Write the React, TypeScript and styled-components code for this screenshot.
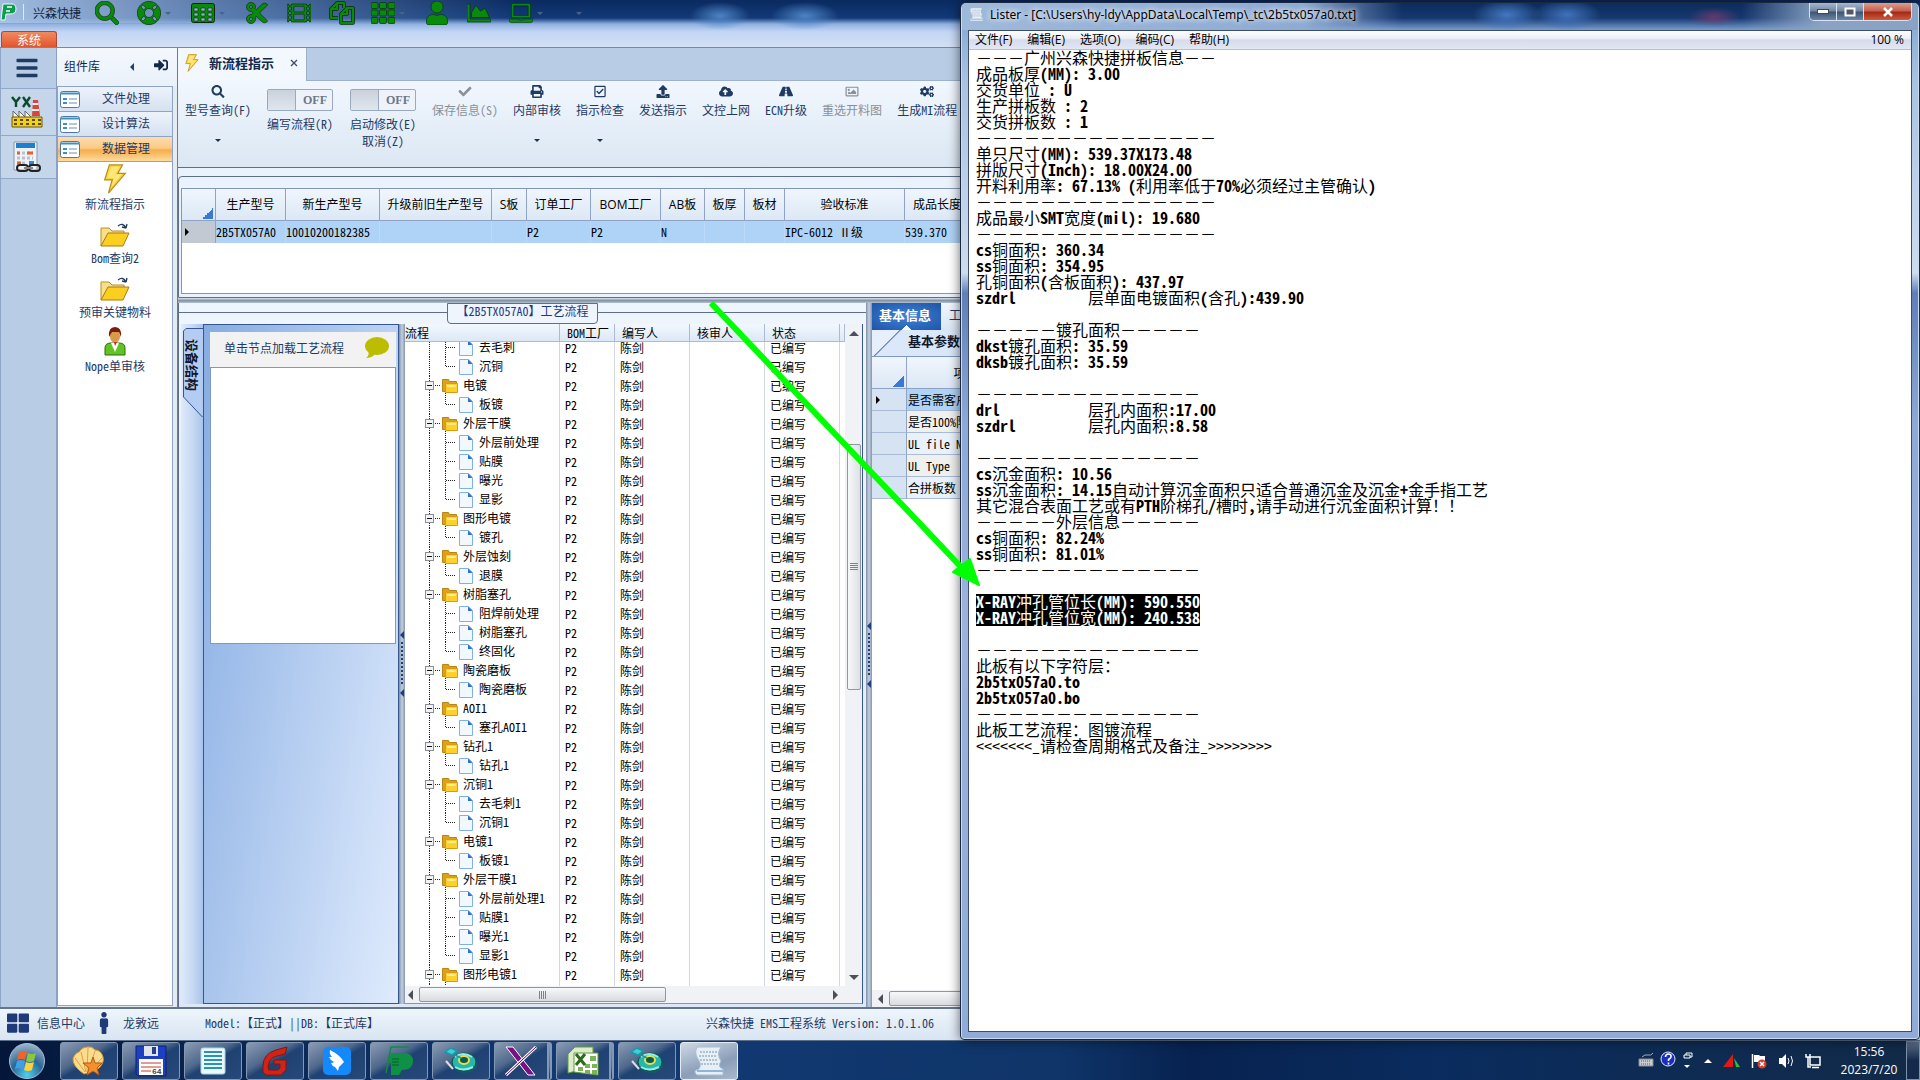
import React from "react";
import styled, { createGlobalStyle, css } from "styled-components";
import {
  FaBars, FaChartArea, FaCheck, FaCloudUploadAlt, FaCogs, FaCut, FaFilm, FaLaptop, FaLifeRing,
  FaMale, FaPrint, FaRegCheckSquare, FaRegImage, FaRoad, FaSearch, FaSignInAlt, FaTh, FaThLarge,
  FaUpload, FaUser,
} from "react-icons/fa";

const SONG = '"Noto Sans Mono CJK SC", "Liberation Mono", "Noto Sans CJK SC", monospace';
const YAHEI = '"Open Sans", "Noto Sans CJK SC", sans-serif';
const NAVY = "#1f3a63";

const Global = createGlobalStyle`
  *, *::before, *::after { box-sizing: border-box; }
  body { margin: 0; overflow: hidden; background: #0b2147; font: 12px/16px ${SONG}; color: ${NAVY}; }
  button { font: inherit; color: inherit; background: none; border: 0; padding: 0; margin: 0; white-space: nowrap; }
  table { border-collapse: separate; border-spacing: 0; table-layout: fixed; }
  th, td { padding: 0; font-weight: normal; text-align: left; overflow: hidden; white-space: nowrap; }
  svg { display: block; flex: none; }
`;

const Desktop = styled.div`
  position: relative;
  display: flex;
  flex-direction: column;
  height: 100vh;
  overflow: hidden;
`;

/* ---------- main window ---------- */

const TitleArea = styled.header`
  display: flex;
  flex-direction: column;
  justify-content: space-between;
  height: 48px;
  border-bottom: 1px solid #7388ab;
  background:
    radial-gradient(ellipse 30px 14px at 720px 16px, #4d83c4, transparent),
    radial-gradient(ellipse 34px 14px at 805px 16px, #4d83c4, transparent),
    linear-gradient(90deg, rgba(170, 196, 230, 0.95) 0, rgba(140, 172, 216, 0.6) 220px, transparent 520px) 0 0 / 100% 23px no-repeat,
    linear-gradient(#0a2a60 0, #123a78 18px, #8fb0e0 24px, #c3d6f6 32px, #d4e0f4 48px);
`;
const QuickBar = styled.div`
  display: flex;
  align-items: center;
  height: 26px;
`;
const AppTitle = styled.span`
  width: 86px;
  display: flex;
  align-items: center;
  gap: 9px;
  color: #10243f;
`;
const QuickButton = styled.button<{ $menu?: boolean }>`
  width: ${(p) => (p.$menu ? 54 : 42)}px;
  padding-left: 9px;
  display: flex;
  align-items: center;
  gap: 4px;
  height: 24px;
  font-size: 24px;
  color: #0a8a0a;
  svg.glyph { stroke: #052c05; stroke-width: 14px; }
`;
const SystemTab = styled.button`
  align-self: flex-start;
  margin-left: 1px;
  width: 56px;
  height: 16px;
  line-height: 16px;
  overflow: hidden;
  color: #fff;
  border: 1px solid #b4462c;
  border-bottom: 0;
  border-radius: 3px 3px 0 0;
  background: linear-gradient(#f08a5e, #e2552f);
`;

const Caret = styled.span<{ $dim?: boolean }>`
  border: 3px solid transparent;
  border-top-color: ${(p) => (p.$dim ? "#46638c" : "#1f3050")};
  border-bottom: 0;
`;

const Body = styled.div`
  flex: 1;
  min-height: 0;
  display: flex;
  background: #b9cce5;
`;
const Rail = styled.nav`
  width: 56px;
  display: flex;
  flex-direction: column;
  align-items: center;
  border-left: 1px solid #8fa6c8;
`;
const RailButton = styled.button<{ $h: number; $lit?: boolean }>`
  width: 100%;
  height: ${(p) => p.$h}px;
  padding-right: 4px;
  display: grid;
  place-items: center;
  font-size: 24px;
  border-bottom: 1px solid #92a8ca;
  background: ${(p) => (p.$lit ? "#c6d6ea" : "none")};
`;

const Library = styled.aside`
  width: 122px;
  padding: 0 4px 1px 0;
  display: flex;
  flex-direction: column;
  background: #e6ebf2;
  border-left: 1px solid #8aa0c4;
  border-right: 1px solid #6c7a92;
`;
const LibraryHead = styled.div`
  height: 38px;
  margin-right: -4px;
  padding: 0 9px 0 7px;
  display: flex;
  align-items: center;
  background: linear-gradient(#f4f8fd, #e9f1fa);
  font-family: ${YAHEI};
  color: #14284a;
  b { font-weight: normal; flex: 1; }
  svg { margin: 0 0 4px 20px; }
`;
const LibraryGroup = styled.button<{ $on?: boolean }>`
  display: flex;
  align-items: center;
  width: 100%;
  height: 25px;
  padding-left: 2px;
  gap: 22px;
  border: 1px solid #8ea3c6;
  border-bottom: 0;
  span { line-height: 20px; padding-bottom: 2px; }
  background: ${(p) =>
    p.$on ? "linear-gradient(#fddcae 0, #fbcb86 45%, #f6ad4c 55%, #fddc9f 100%)" : "linear-gradient(#edf3fb, #d5e1f1)"};
`;
const LibraryList = styled.div`
  flex: 1;
  display: flex;
  flex-direction: column;
  border: 1px solid #8ea3c6;
  background: #fff;
`;
const LibraryItem = styled.button`
  height: 54px;
  padding-bottom: 3px;
  display: flex;
  flex-direction: column;
  align-items: center;
  justify-content: flex-end;
  gap: 1px;
  line-height: 18px;
`;

const Workspace = styled.main`
  flex: 1;
  min-width: 0;
  display: flex;
  flex-direction: column;
  background: #eaf2fb;
`;
const DocTabs = styled.div`
  height: 33px;
  display: flex;
  background: #b9cce5;
  border-bottom: 1px solid #9db1cf;
`;
const DocTab = styled.div`
  height: 33px;
  width: 129px;
  padding: 0 8px 4px 5px;
  display: flex;
  align-items: center;
  gap: 8px;
  font-size: 13px;
  font-weight: bold;
  color: #14284a;
  background: #f3f8fe;
  border-right: 1px solid #9db1cf;
  white-space: nowrap;
  button { margin-left: auto; }
`;
const Toolbar = styled.div`
  height: 87px;
  padding: 4px 8px 0 7px;
  display: flex;
  align-items: flex-start;
  gap: 15px;
  overflow: hidden;
  background: linear-gradient(#f1f7fe, #dbe7f3);
  border-bottom: 1px solid #5e6f8d;
`;
const Tool = styled.button<{ $off?: boolean }>`
  display: flex;
  flex-direction: column;
  align-items: center;
  font-size: 12px;
  line-height: 18px;
  color: ${(p) => (p.$off ? "#8b9097" : NAVY)};
  svg { height: 13px; width: 14px; margin-bottom: 3px; }
  ${Caret} { margin-top: 20px; }
`;
const ToggleTool = styled.label`
  width: 68px;
  padding-top: 4px;
  display: flex;
  flex-direction: column;
  align-items: center;
  line-height: 17px;
  white-space: nowrap;
  position: relative;
  input { position: absolute; opacity: 0; margin: 0; }
`;
const Switch = styled.span`
  width: 66px;
  height: 22px;
  margin-bottom: 4px;
  display: flex;
  border: 1px solid #9aa9bf;
  border-radius: 2px;
  font: bold 12px/20px "Liberation Serif", serif;
  letter-spacing: 0;
  color: #6a7787;
  background: #eef3f9;
  &::before { content: ""; width: 28px; margin-right: 7px; border-right: 1px solid #9aa9bf; background: linear-gradient(#c9d1db, #dfe6ee); }
`;

const GridBox = styled.section`
  margin: 8px 0 0;
  padding: 11px 0 3px 2px;
  height: 122px;
  border: 1px solid #5e6f8d;
  border-radius: 4px 0 0 0;
  display: flex;
`;
const GridPane = styled.div`
  flex: 1;
  min-width: 0;
  overflow: hidden;
  background: #fff;
  border: 1px solid #8097bd;
`;
const DataTable = styled.table`
  width: 1060px;
  font-size: 12px;
  color: #000;
  th { height: 32px; font-family: ${YAHEI}; text-align: center; border-right: 1px solid #8ea3c6; border-bottom: 1px solid #8ea3c6; background: linear-gradient(#f0f6fd, #dce8f5); }
  td { height: 22px; line-height: 20px; padding-left: 0; background: #afd3f6; border-right: 1px solid #bcdaf7; }
  td:first-child { background: #c3c9d2; border-right: 1px solid #8ea3c6; padding-left: 3px; }
`;
const Corner = styled.span`
  display: block;
  margin: 17px 2px 0 auto;
  width: 11px;
  height: 11px;
  background: linear-gradient(135deg, transparent 50%, #3a78d8 50%);
`;
const RowMark = styled.span`
  display: block;
  width: 0;
  border: 4px solid transparent;
  border-left: 4px solid #000;
  border-right: 0;
`;
const HSash = styled.div`
  height: 5px;
  background: linear-gradient(#dbe7f3, #8593a5, #b4c0cf);
`;

const Lower = styled.div`
  flex: 1;
  min-height: 0;
  display: flex;
`;
const FlowGroup = styled.section`
  flex: 0 0 688px;
  min-width: 0;
  display: flex;
  flex-direction: column;
  border-left: 1px solid #5e6f8d;
  background: linear-gradient(#eef5fd, #dce8f5);
`;
const LegendRow = styled.div`
  height: 21px;
  display: flex;
`;
const LegendLine = styled.i`
  flex: 1;
  height: 12px;
  align-self: flex-end;
  border-top: 1px solid #5e6f8d;
`;
const Legend = styled.h2`
  margin: 0;
  width: 151px;
  font-size: 12px;
  font-weight: normal;
  line-height: 13px;
  text-align: center;
  white-space: nowrap;
  border: 1px solid #5e6f8d;
  border-radius: 0 0 4px 4px;
  color: #1f3a83;
`;
const FlowBody = styled.div`
  flex: 1;
  min-height: 0;
  display: flex;
  padding: 0 3px 3px 2px;
`;
const SideStrip = styled.div`
  width: 22px;
  background: linear-gradient(90deg, #dfeafa, #c3d6f2 60%, #a8c3ec);
`;
const SideTab = styled.button`
  position: relative;
  width: 22px;
  height: 94px;
  padding: 0 0 12px;
  writing-mode: vertical-rl;
  text-orientation: sideways;
  font-size: 13px;
  line-height: 22px;
  font-weight: bold;
  color: #10182c;
  svg { position: absolute; left: 0; top: 0; z-index: 0; }
  span { position: relative; }
`;
const StructurePane = styled.div`
  width: 196px;
  padding: 7px 2px 0 6px;
  display: flex;
  flex-direction: column;
  border: 1px solid #35568f;
  background: linear-gradient(100deg, #86ace2, #dfebfd);
`;
const Hint = styled.div`
  height: 35px;
  padding: 0 6px 3px 14px;
  display: flex;
  align-items: center;
  justify-content: space-between;
  background: #f2f2f2;
  white-space: nowrap;
`;
const Blank = styled.div`
  height: 277px;
  background: #fff;
  border: 1px solid #7d98c4;
`;
const VSash = styled.div`
  flex: 0 0 6px;
  display: flex;
  flex-direction: column;
  align-items: center;
  justify-content: center;
  gap: 3px;
  background: linear-gradient(90deg, #7f8fa6, #c4d0e0, #8494ab);
`;
const SashArrow = styled.i`
  border: 4px solid transparent;
  border-right: 4px solid #1e3f7e;
  border-left: 0;
`;
const SashGrip = styled.i`
  width: 2px;
  height: 44px;
  background: repeating-linear-gradient(#1e3f7e 0 2px, transparent 2px 4px);
`;
const TreePane = styled.div`
  flex: 1;
  min-width: 0;
  display: flex;
  flex-direction: column;
  background: #fff;
  border-right: 1px solid #35568f;
  border-bottom: 1px solid #7d98c4;
`;
const TreeTop = styled.div`
  flex: 1;
  min-height: 0;
  display: flex;
`;
const TreeTables = styled.div`
  flex: 1;
  min-width: 0;
  display: flex;
  flex-direction: column;
`;
const TreeHead = styled.table`
  width: 100%;
  color: #000;
  th { height: 18px; line-height: 17px; padding-left: 7px; border-right: 1px solid #a9bbd6; border-bottom: 1px solid #a9bbd6; background: linear-gradient(#f3f8fe, #dce8f5); }
  th:first-child { padding-left: 0; }
`;
const TreeScroll = styled.div`
  flex: 1;
  min-height: 0;
  overflow: hidden;
`;
const TreeTable = styled.table`
  width: 100%;
  margin-top: -4px;
  color: #000;
  td { height: 19px; line-height: 17px; padding-left: 5px; border-right: 1px solid #d3d8df; }
  td:first-child { padding-left: 0; }
  td:last-child { border-right: 0; }
`;
const Node = styled.div`
  display: flex;
  height: 19px;
`;
const VBar = styled.div`
  width: 17px;
  padding: 7px 0 6px;
  display: flex;
  flex-direction: column;
  align-items: center;
  background: #f0f2f5;
`;
const HBar = styled.div`
  height: 17px;
  padding: 0 6px 0 3px;
  display: flex;
  align-items: center;
  background: #f0f2f5;
`;
const Thumb = styled.i<{ $dir: "h" | "v"; $size: number }>`
  display: grid;
  place-items: center;
  border: 1px solid #8f979f;
  border-radius: 2px;
  &::after { content: ""; }
  ${(p) =>
    p.$dir === "h"
      ? css`width: ${p.$size}px; height: 15px; background: linear-gradient(#f7f8f9, #d8dbe0);
          &::after { width: 8px; height: 8px; background: repeating-linear-gradient(90deg, #7b828a 0 1px, transparent 1px 2px); }`
      : css`width: 14px; height: ${p.$size}px; background: linear-gradient(90deg, #f7f8f9, #dde1e6);
          &::after { width: 8px; height: 8px; background: repeating-linear-gradient(#7b828a 0 1px, transparent 1px 2px); }`}
`;
const Arrow = styled.i<{ $to: "up" | "down" | "left" | "right" }>`
  border: 5px solid transparent;
  ${(p) => p.$to === "up" && "border-bottom-color:#4a5058;border-top:0;"}
  ${(p) => p.$to === "down" && "border-top-color:#4a5058;border-bottom:0;"}
  ${(p) => p.$to === "left" && "border-right-color:#4a5058;border-left:0;"}
  ${(p) => p.$to === "right" && "border-left-color:#4a5058;border-right:0;"}
`;
const Gap = styled.i<{ $w: number }>`
  flex: 0 0 ${(p) => p.$w}px;
`;
const Fill = styled.i`
  flex: 1;
`;

const InfoPane = styled.section`
  flex: 1;
  min-width: 0;
  display: flex;
  flex-direction: column;
  background: #fff;
`;
const InfoTabs = styled.div`
  height: 27px;
  display: flex;
  background: linear-gradient(#f1f6fc, #dbe6f4);
`;
const InfoTab = styled.button<{ $on?: boolean }>`
  width: 69px;
  height: 27px;
  padding: 0 ${(p) => (p.$on ? 3 : 0)}px 4px ${(p) => (p.$on ? 0 : 8)}px;
  text-align: ${(p) => (p.$on ? "center" : "left")};
  font-size: ${(p) => (p.$on ? 13 : 12)}px;
  font-weight: ${(p) => (p.$on ? "bold" : "normal")};
  color: ${(p) => (p.$on ? "#fff" : NAVY)};
  background: ${(p) =>
    p.$on
      ? "linear-gradient(45deg, #f3f8fe 4px, transparent 4px) 34px 20px / 7px 7px no-repeat, linear-gradient(-45deg, #f3f8fe 4px, transparent 4px) 28px 20px / 7px 7px no-repeat, radial-gradient(#3f83d6, #1d54a8)"
      : "none"};
`;
const SubTab = styled.h3`
  margin: 0;
  height: 27px;
  padding-left: 36px;
  font-size: 13px;
  line-height: 22px;
  color: #10182c;
  background: linear-gradient(135deg, #e6effb 19px, #4d6fa8 20px, #dbe8fa 21px, #c6daf6 60%, #93b6ea);
  border-bottom: 1px solid #7d98c4;
`;
const InfoTable = styled.table`
  width: 400px;
  color: #000;
  th { height: 32px; text-align: center; padding-top: 0; border-right: 1px solid #8ea3c6; border-bottom: 1px solid #8ea3c6; background: linear-gradient(#f0f6fd, #dce8f5); }
  td { height: 22px; padding-left: 1px; border-right: 1px solid #8ea3c6; border-bottom: 1px solid #a9bbd6; background: #f0f0ee; }
  tr:nth-child(odd) td { background: #e9f1fb; }
  tbody tr:first-child td + td { background: #afd3f6; }
  tbody td:first-child, tbody tr:nth-child(odd) td:first-child { background: #d6e3f3; padding-left: 4px; }
`;

const StatusBar = styled.footer`
  height: 33px;
  padding: 0 7px 3px;
  display: flex;
  align-items: center;
  border-top: 2px solid #66758e;
  background: linear-gradient(#eef5fc, #d9e5f2);
  white-space: nowrap;
  svg { font-size: 22px; color: #1f3a7a; }
`;
const StatusHalf = styled.div`
  width: 50%;
  padding-right: 26px;
  display: flex;
  align-items: center;
  justify-content: space-between;
`;
const StatusItems = styled.div`
  display: flex;
  align-items: center;
  gap: 8px;
`;
const ModelText = styled.span`
  margin-left: 38px;
`;

/* ---------- lister window ---------- */

const ListerWindow = styled.section`
  position: absolute;
  left: 50%;
  right: 0;
  top: 2px;
  bottom: 40px;
  padding: 0 7px 7px;
  display: flex;
  flex-direction: column;
  border: 1px solid #1b2940;
  border-radius: 6px 6px 4px 4px;
  box-shadow: inset 0 0 0 1px #c9dcf2, 0 0 12px rgba(0, 0, 0, 0.6);
  background: linear-gradient(#7fa3d0 0, #a9c3e2 80px, #cddcee 270px, #5f7fb8 290px, #8ea9d6 420px, #9bb3dd 60%, #8fabd6 100%);
`;
const ListerTitle = styled.header`
  height: 27px;
  margin: 0 -6px;
  padding: 0 0 4px 7px;
  display: flex;
  align-items: center;
  gap: 6px;
  font: 12px/16px "Noto Sans", ${YAHEI};
  color: #000;
  white-space: nowrap;
  border-radius: 5px 5px 0 0;
  background:
    radial-gradient(ellipse 34px 16px at 545px 12px, #4478c0, transparent),
    radial-gradient(ellipse 34px 16px at 605px 12px, #3f72ba, transparent),
    radial-gradient(ellipse 26px 10px at 752px 14px, rgba(130, 60, 110, 0.7), transparent),
    linear-gradient(90deg, #9fb9da 0, #8eabd3 340px, rgba(120, 150, 195, 0) 440px, rgba(130, 160, 200, 0) 780px, #8aa3c4 860px),
    linear-gradient(#0d2b5c 0, #15386f 15px, #7fa6d8 28px);
  span { text-shadow: 0 0 6px #fff, 0 0 6px #fff; }
`;
const WinButtons = styled.div`
  align-self: flex-start;
  margin: 0 6px 0 auto;
  display: flex;
  height: 18px;
  border: 1px solid #d6e2f0;
  border-top: 0;
  border-radius: 0 0 5px 5px;
  overflow: hidden;
`;
const WinButton = styled.button<{ $close?: boolean }>`
  width: ${(p) => (p.$close ? 47 : 27)}px;
  display: grid;
  place-items: center;
  border-right: 1px solid #d6e2f0;
  background: ${(p) =>
    p.$close ? "linear-gradient(#d9a094 0, #c8604c 45%, #a52a16 55%, #cf5a3c)" : "linear-gradient(#a8b8cc 0, #7388a4 45%, #405674 55%, #6c86a8)"};
  &:last-child { border-right: 0; }
`;
const Client = styled.div`
  flex: 1;
  min-height: 0;
  overflow: hidden;
  display: flex;
  flex-direction: column;
  border: 1px solid #3c4d68;
  background: #fff;
`;
const MenuBar = styled.div`
  height: 19px;
  padding: 0 7px 1px 6px;
  display: flex;
  align-items: center;
  gap: 15px;
  font: 12px/16px ${YAHEI};
  color: #000;
  border-bottom: 1px solid #b9bfcf;
  background: linear-gradient(#fdfdfe 0, #eef0f8 40%, #d6dcec 50%, #e2e6f5);
  output { margin-left: auto; }
`;
const Page = styled.pre`
  margin: 0;
  padding: 0 7px;
  font: 16px/14px ${SONG};
  color: #000;
`;
const Line = styled.div<{ $sel?: boolean }>`
  width: max-content;
  height: 16px;
  color: ${(p) => (p.$sel ? "#fff" : "#000")};
  background: ${(p) => (p.$sel ? "#000" : "none")};
`;

const Annotation = styled.svg`
  position: absolute;
  left: 704px;
  top: 296px;
  z-index: 3;
  pointer-events: none;
`;

/* ---------- taskbar ---------- */

const TaskBar = styled.footer`
  height: 40px;
  padding: 0 0 0 7px;
  display: flex;
  align-items: center;
  color: #fff;
  border-top: 1px solid #5b6f8c;
  background: linear-gradient(90deg, #04173a, #123a74 30%, #0f3569 55%, #072250 62%, #0a2c5e 75%, #122a48);
`;
const Orb = styled.button`
  width: 40px;
  margin-right: 13px;
`;
const TaskList = styled.div`
  display: flex;
  gap: 4px;
`;
const Task = styled.button<{ $active?: boolean; $stack?: boolean }>`
  width: 58px;
  height: 38px;
  display: grid;
  place-items: center;
  border: 1px solid ${(p) => (p.$active ? "#e4ecf5" : "#8398b5")};
  border-right: ${(p) => (p.$stack ? "5px double #8398b5" : "")};
  border-radius: 3px;
  background: ${(p) =>
    p.$active
      ? "linear-gradient(160deg, #cfd9e5, #8b9db8 60%, #a9b8cc)"
      : "linear-gradient(150deg, #8b9cb4 0, #4f688c 40%, #1f4272 52%, #27497a)"};
`;
const Tray = styled.div`
  margin-left: auto;
  height: 39px;
  display: flex;
  align-items: center;
  gap: 11px;
  font: 12px/20px ${YAHEI};
`;
const TrayArrow = styled.i`
  border: 4px solid transparent;
  border-bottom-color: #fff;
  border-top: 0;
`;
const Clock = styled.time`
  width: 74px;
  text-align: center;
  line-height: 18px;
`;
const Peek = styled.button`
  width: 14px;
  height: 39px;
  border: 1px solid #7f90a8;
  background: linear-gradient(#5d6f88, #15294a 50%);
`;

/* ---------- drawings ---------- */

const TableGlyph = () => (
  <svg className="glyph-table" width="24" height="20" viewBox="0 0 24 20" aria-hidden="true">
    <rect x=".5" y=".5" width="23" height="19" rx="2" fill="#0a8a0a" stroke="#052c05" />
    <path d="M3 5h4v3H3zM10 5h4v3h-4zM17 5h4v3h-4zM3 10h4v3H3zM10 10h4v3h-4zM17 10h4v3h-4zM3 15h4v3H3zM10 15h4v3h-4zM17 15h4v3h-4z" fill="#8fb0dc" stroke="#052c05" strokeWidth=".6" />
  </svg>
);
const CopyGlyph = () => (
  <svg width="26" height="24" viewBox="0 0 26 24" aria-hidden="true">
    <g fill="none" strokeLinejoin="round">
      <path d="M9 17H2V8l6-6h7v5M2 8h6V2M12 13h6V7h6v15H12zL18 7" stroke="#052c05" strokeWidth="3.600" />
      <path d="M9 17H2V8l6-6h7v5M2 8h6V2M12 13h6V7h6v15H12zL18 7" stroke="#0a8a0a" strokeWidth="2.200" />
    </g>
  </svg>
);
const Bolt = ({ s }: { s: number }) => (
  <svg width={s} height={s} viewBox="0 0 24 32" aria-hidden="true">
    <path d="M6 1h14l-5 9h8L5 31l4-14H1z" fill="#fbd53a" stroke="#b98b1d" strokeWidth="1.3" />
    <path d="M8 3h9l-5 8h7L8 25l3-10H4z" fill="#fff3a6" opacity=".6" />
  </svg>
);
const OpenFolder = () => (
  <svg width="30" height="26" viewBox="0 0 30 26" aria-hidden="true">
    <path d="M1 24V6h8l3 3h12v4" fill="#f6e08a" stroke="#b98d25" />
    <path d="M1 24 8 11h21l-6 13z" fill="#fbcf1f" stroke="#a97b14" />
    <path d="M18 4q5-4 8 2m0 0 1-4m-1 4-4-1" fill="none" stroke="#1f3a63" strokeWidth="1.3" />
  </svg>
);
const Person = () => (
  <svg width="22" height="30" viewBox="0 0 22 30" aria-hidden="true">
    <path d="M1 29v-7q0-5 6-5h8q6 0 6 5v7z" fill="#62c422" stroke="#2f6b12" />
    <path d="m7 17 4 9 4-9z" fill="#fff" />
    <ellipse cx="11" cy="10" rx="5" ry="7" fill="#d99a4a" />
    <path d="M5 11q-1-10 6-10t6 10l-2-5H8z" fill="#7a1c10" />
    <path d="m10 16 1 4 2-4z" fill="#d02020" />
  </svg>
);
const Factory = () => (
  <svg width="32" height="32" viewBox="0 0 32 32" aria-hidden="true">
    <path d="m1 1 4 5v5M9 1 5 6M12 1l7 10M19 1l-7 10" stroke="#0d4a2a" strokeWidth="2.4" fill="none" />
    <path d="M21 20 22 4h5l2 16z" fill="#d8453a" />
    <path d="M21.500 8h6M21 14h7" stroke="#eee" strokeWidth="2" />
    <path d="M2 21v-6l6 6v-6l6 6v-6l6 6" fill="#f4f4f4" stroke="#666" />
    <path d="M1 21h30v10H1z" fill="#f2cf18" stroke="#6e5a08" />
    <path d="M3 24h27M3 28h27" stroke="#5a4a08" strokeWidth="2" strokeDasharray="3 3" />
  </svg>
);
const Planner = () => (
  <svg width="30" height="32" viewBox="0 0 30 32" aria-hidden="true">
    <path d="M2 1h23v28H2z" fill="#eef3f9" stroke="#8a97a8" />
    <path d="M4 2h19v5H4z" fill="#1d7fd0" />
    <path d="M5 12h16M5 17h16M5 22h10" stroke="#b9c2cc" strokeWidth="3" strokeDasharray="3 2" />
    <path d="M5 12h3M15 12h6M5 22h4" stroke="#e8622a" strokeWidth="3" />
    <path d="M17 20h5v4h-5z" fill="#2a8ae0" />
    <rect x="5" y="24" width="11" height="6" rx="3" fill="none" stroke="#222" strokeWidth="2" />
    <rect x="17" y="24" width="11" height="6" rx="3" fill="none" stroke="#222" strokeWidth="2" />
    <path d="M12 27h9" stroke="#888" strokeWidth="2" />
  </svg>
);
const FormIcon = () => (
  <svg width="20" height="17" viewBox="0 0 20 17" aria-hidden="true">
    <rect x=".5" y=".5" width="19" height="16" rx="2" fill="#fff" stroke="#4c7aa6" />
    <path d="M1 2.500h18" stroke="#3f8fc4" strokeWidth="2" />
    <path d="M3 8h4M3 12h4" stroke="#3f8fc4" strokeWidth="2" />
    <path d="M9 8h8M9 12h8" stroke="#b7c7d8" strokeWidth="2" />
  </svg>
);

const dot = { stroke: "#222", strokeDasharray: "1 1", shapeRendering: "crispEdges" as const };
const GroupNode = () => (
  <svg width="58" height="19" viewBox="0 0 58 19" aria-hidden="true">
    <path d="M24.500 0V19M30 9.500H36" {...dot} />
    <path d="M40.500 15V19" {...dot} />
    <rect x="20.500" y="5.500" width="8" height="8" fill="#f3f3f3" stroke="#8a8f96" />
    <path d="M22 9.500h5" stroke="#111" />
    <path d="M37.500 15.500V3.500h6l1 2h7v10z" fill="#d9a320" stroke="#b98412" />
    <path d="M40.500 16.500v-9h12v9z" fill="#ffcf2b" stroke="#dc9a10" />
    <path d="M42 9h9v2h-9z" fill="#ffec8a" />
  </svg>
);
const LeafNode = ({ last }: { last: boolean }) => (
  <svg width="74" height="19" viewBox="0 0 74 19" aria-hidden="true">
    <path d={`M24.500 0V19M40.500 0V${last ? 9 : 19}M41 9.500H50`} {...dot} />
    <path d="M54.500 2.500h9l4 4v11h-13z" fill="#f2f8ff" stroke="#7fb0ea" />
    <path d="M63 2.500v4.500h4.500z" fill="#2f6fd0" />
  </svg>
);

const Paper = ({ w }: { w: number }) => (
  <svg width={w} height={w} viewBox="0 0 32 32" aria-hidden="true">
    <path d="M4 2h24q-5 7 0 14-4 6 2 8v6H4q-5-4 2-6 3-5-1-10-4-6-1-12z" fill="#e6eef6" stroke="#a9bfd4" />
    <path d="M7 7h18M6 11h18M7 15h18M8 19h17" stroke="#9fb2c8" strokeDasharray="2 1" strokeWidth="1.500" />
    <path d="M4 26h26" stroke="#8fb4d6" strokeWidth="2" />
  </svg>
);
const Shell = () => (
  <svg width="34" height="30" viewBox="0 0 34 30">
    <path d="M12 28Q0 20 1 12 4 6 7 6q3-5 8-5 5-1 8 3 6 0 8 7 2 6-6 13z" fill="#fbdc8e" stroke="#d9962c" />
    <path d="M13 26 3 12M14 26 9 6M15 26 16 2M16 26 23 5M17 26 30 12" stroke="#e0a23c" fill="none" />
    <path d="m21 11 2 6 7 0-5 5 2 7-6-4-6 4 2-7-6-5 8 0z" fill="#f4902c" stroke="#b9570e" />
  </svg>
);
const Floppy = () => (
  <svg width="32" height="32" viewBox="0 0 32 32">
    <path d="M1 1h30v30H3l-2-2z" fill="#1d3fc4" stroke="#0f2170" />
    <path d="M9 1h14v10H9z" fill="#dfe4ea" /><path d="M17 2h4v7h-4z" fill="#26408c" />
    <path d="M4 14h24v16H4z" fill="#fff" />
    <path d="M6 18h20M6 22h20M6 26h10" stroke="#c0392b" />
    <text x="17" y="29" fontSize="8" fontFamily="Liberation Mono" fontWeight="bold" fill="#444">64</text>
  </svg>
);
const Notes = () => (
  <svg width="26" height="28" viewBox="0 0 26 28">
    <rect x="1" y="1" width="24" height="26" rx="2" fill="#eaf8fc" stroke="#a9d5e4" />
    <path d="M4 5h18M4 9h18M4 13h18M4 17h18M4 21h18" stroke="#2a93b5" strokeWidth="2" />
  </svg>
);
const RedG = () => (
  <svg width="30" height="30" viewBox="0 0 30 30">
    <path d="M27 1 16 4Q3 8 3 20v6l3 3h15l5-5V14H14v4h6v4l-2 2H9l-1-2q0-10 9-12l8-2z" fill="#cf2418" stroke="#8e120a" />
  </svg>
);
const Wing = () => (
  <svg width="28" height="28" viewBox="0 0 28 28">
    <rect width="28" height="28" rx="5" fill="#1489fb" />
    <path d="M7 3q10 5 14 12l-5 5-1 4-3-4q-3-1-4-4 2 0 3-1-4-2-5-5h3Q6 7 7 3z" fill="#fff" />
  </svg>
);
const GreenP = () => (
  <svg width="32" height="32" viewBox="0 0 32 32">
    <path d="M3 28 8 2h18" fill="none" stroke="#128a42" strokeWidth="1.500" />
    <path d="M8 8h10q12-1 12 8 0 9-11 9l-3 5H8V18H6z" fill="#0f9145" />
    <path d="M9 14h7M9 17h7M9 20h7" stroke="#0a5a2c" />
  </svg>
);
const Disc = () => (
  <svg width="34" height="30" viewBox="0 0 34 30">
    <ellipse cx="21" cy="19" rx="12" ry="8" fill="#145a66" />
    <ellipse cx="20" cy="16" rx="12" ry="9" fill="#27b5ac" stroke="#0c4c50" />
    <path d="M11 11q8-6 17 0M11 21q8 5 18 0" stroke="#8ff0e0" strokeWidth="2" fill="none" />
    <ellipse cx="20" cy="14" rx="5" ry="4" fill="#0d5a4a" stroke="#e7e04a" strokeWidth="2" />
    <path d="m1 6 6-4 6 3-5 4zM9 8l8 4" fill="#3fd0da" stroke="#169aa8" strokeWidth="1.500" />
    <path d="m2 15 7 8" stroke="#ddd" strokeWidth="2" />
  </svg>
);
const XMark = () => (
  <svg width="34" height="30" viewBox="0 0 34 30">
    <path d="M2 1h7l22 28h-7z" fill="#7b0f86" stroke="#fff" /><path d="M32 1 2 29" stroke="#fff" strokeWidth="3" />
    <path d="M32 1 2 29" stroke="#5c0b64" />
  </svg>
);
const Sheet = () => (
  <svg width="32" height="30" viewBox="0 0 32 30">
    <path d="M1 27V8l7-7h18v20z" fill="#dcecc9" stroke="#5f9b3a" />
    <path d="M7 7h24v22L7 26z" fill="#fff" stroke="#5c9a36" />
    <path d="M18 18h5v4h-5zM25 18h5v4h-5zM11 21h5v4h-5zM18 24h5v4h-5zM25 24h5v4h-5zM23 10h6v5h-6z" fill="#7db355" />
    <path d="m9 8 9 11M18 8 9 19" stroke="#2c6b1c" strokeWidth="3" />
  </svg>
);
const Flag = () => (
  <svg width="38" height="38" viewBox="0 0 38 38">
    <defs>
      <radialGradient id="orb" cx=".5" cy=".9" r=".9"><stop offset="0" stopColor="#4fd0f0" /><stop offset=".5" stopColor="#2a6796" /><stop offset="1" stopColor="#9fb6cc" /></radialGradient>
    </defs>
    <circle cx="20" cy="19" r="17.500" fill="url(#orb)" stroke="#a8bdd2" />
    <path d="M12 10q4-2 8 0l-2 8q-4-2-8 0z" fill="#f0642c" /><path d="M21 11q4 2 8 0l-2 8q-4 2-8 0z" fill="#8cc63e" />
    <path d="M10 19q4-2 8 0l-2 8q-4-2-8 0z" fill="#3fa0e8" /><path d="M19 20q4 2 8 0l-2 8q-4 2-8 0z" fill="#fbd23a" />
  </svg>
);

/* ---------- data ---------- */

const QUICK: { name: string; icon: React.ComponentType<{ className?: string }>; menu?: boolean }[] = [
  { name: "查询", icon: FaSearch }, { name: "帮助", icon: FaLifeRing, menu: true }, { name: "表格", icon: TableGlyph, menu: true },
  { name: "剪切", icon: FaCut }, { name: "胶片", icon: FaFilm }, { name: "复制", icon: CopyGlyph }, { name: "网格", icon: FaTh, menu: true },
  { name: "用户", icon: FaUser }, { name: "图表", icon: FaChartArea }, { name: "终端", icon: FaLaptop, menu: true },
];

const GRID: [string, number, string][] = [
  ["生产型号", 70, "2B5TX057A0"], ["新生产型号", 94, "10010200182385"], ["升级前旧生产型号", 112, ""], ["S板", 35, ""],
  ["订单工厂", 64, "P2"], ["BOM工厂", 70, "P2"], ["AB板", 44, "N"], ["板厚", 40, ""], ["板材", 40, ""],
  ["验收标准", 120, "IPC-6012 Ⅱ级"], ["成品长度", 65, "539.370"],
];

const TREE: [string, string[]][] = [
  ["", ["去毛刺", "沉铜"]], ["电镀", ["板镀"]], ["外层干膜", ["外层前处理", "贴膜", "曝光", "显影"]], ["图形电镀", ["镀孔"]],
  ["外层蚀刻", ["退膜"]], ["树脂塞孔", ["阻焊前处理", "树脂塞孔", "终固化"]], ["陶瓷磨板", ["陶瓷磨板"]], ["AOI1", ["塞孔AOI1"]],
  ["钻孔1", ["钻孔1"]], ["沉铜1", ["去毛刺1", "沉铜1"]], ["电镀1", ["板镀1"]], ["外层干膜1", ["外层前处理1", "贴膜1", "曝光1", "显影1"]],
  ["图形电镀1", []],
];

const D15 = "－".repeat(15);
const D14 = "－".repeat(14);
const LINES = [
  "－－－广州兴森快捷拼板信息－－", "成品板厚(MM): 3.00", "交货单位 : U", "生产拼板数 : 2", "交货拼板数 : 1", D15,
  "单只尺寸(MM): 539.37X173.48", "拼版尺寸(Inch): 18.00X24.00", "开料利用率: 67.13% (利用率低于70%必须经过主管确认)", D15,
  "成品最小SMT宽度(mil): 19.680", D15, "cs铜面积: 360.34", "ss铜面积: 354.95", "孔铜面积(含板面积): 437.97",
  "szdrl         层单面电镀面积(含孔):439.90", "", "－－－－－镀孔面积－－－－－", "dkst镀孔面积: 35.59", "dksb镀孔面积: 35.59", "",
  D14, "drl           层孔内面积:17.00", "szdrl         层孔内面积:8.58", "", D14, "cs沉金面积: 10.56",
  "ss沉金面积: 14.15自动计算沉金面积只适合普通沉金及沉金+金手指工艺", "其它混合表面工艺或有PTH阶梯孔/槽时,请手动进行沉金面积计算！！",
  "－－－－－外层信息－－－－－", "cs铜面积: 82.24%", "ss铜面积: 81.01%", D14, "", "X-RAY冲孔管位长(MM): 590.550",
  "X-RAY冲孔管位宽(MM): 240.538", "", D14, "此板有以下字符层：", "2b5tx057a0.to", "2b5tx057a0.bo", D14,
  "此板工艺流程：图镀流程", "<<<<<<<_请检查周期格式及备注_>>>>>>>>",
];

const Mixed = ({ text }: { text: string }) => (
  <>
    {text.split(/([\x20-\x7e]+)/).map((part, i) => (i % 2 && !/[<>]/.test(part) ? <b key={i}>{part}</b> : part))}
  </>
);

const TreeCols = () => (
  <colgroup>
    <col style={{ width: 155 }} /><col style={{ width: 55 }} /><col style={{ width: 75 }} /><col style={{ width: 75 }} /><col style={{ width: 75 }} /><col />
  </colgroup>
);
const TreeCells = () => (<><td>P2</td><td>陈剑</td><td /><td>已编写</td><td /></>);

const Sash = () => (<VSash><SashArrow /><SashGrip /><SashArrow /></VSash>);

export default function App() {
  return (
    <Desktop>
      <Global />
      <TitleArea>
        <QuickBar>
          <AppTitle>
            <svg width="24" height="20" viewBox="0 0 24 20" aria-hidden="true">
              <path d="M3 1h9q4 0 4 5t-6 5H6l-1 6H1z" fill="#0f9b52" stroke="#e8fff0" />
              <path d="M7 4h5M6 8h4" stroke="#fff" strokeWidth="1.500" /><path d="M23.500 1v16" stroke="#dbe7f5" />
            </svg>
            兴森快捷
          </AppTitle>
          {QUICK.map(({ name, icon: Icon, menu }) => (
            <QuickButton key={name} $menu={menu} aria-label={name}><Icon className="glyph" />{menu && <Caret $dim />}</QuickButton>
          ))}
          <Gap $w={22} /><Caret $dim />
        </QuickBar>
        <SystemTab>系统</SystemTab>
      </TitleArea>

      <Body>
        <Rail>
          <RailButton $h={41} aria-label="菜单"><FaBars /></RailButton>
          <RailButton $h={47} $lit aria-label="工厂"><Factory /></RailButton>
          <RailButton $h={43} $lit aria-label="计划"><Planner /></RailButton>
        </Rail>
        <Library>
          <LibraryHead>
            <b>组件库</b>
            <SashArrow />
            <FaSignInAlt size={14} />
          </LibraryHead>
          <LibraryGroup><FormIcon /><span>文件处理</span></LibraryGroup>
          <LibraryGroup><FormIcon /><span>设计算法</span></LibraryGroup>
          <LibraryGroup $on><FormIcon /><span>数据管理</span></LibraryGroup>
          <LibraryList>
            <LibraryItem><Bolt s={30} />新流程指示</LibraryItem>
            <LibraryItem><OpenFolder />Bom查询2</LibraryItem>
            <LibraryItem><OpenFolder />预审关键物料</LibraryItem>
            <LibraryItem><Person />Nope单审核</LibraryItem>
          </LibraryList>
        </Library>

        <Workspace>
          <DocTabs>
            <DocTab>
              <Bolt s={18} />新流程指示
              <button aria-label="关闭"><svg width="8" height="8" viewBox="0 0 8 8"><path d="m1 1 6 6m0-6L1 7" stroke="#3a4c6a" strokeWidth="1.300" /></svg></button>
            </DocTab>
          </DocTabs>
          <Toolbar>
            <Tool><FaSearch />型号查询(F)<Caret /></Tool>
            <ToggleTool><input type="checkbox" /><Switch>OFF</Switch>编写流程(R)</ToggleTool>
            <ToggleTool><input type="checkbox" /><Switch>OFF</Switch>启动修改(E)<span>取消(Z)</span></ToggleTool>
            <Tool $off><FaCheck />保存信息(S)</Tool>
            <Tool><FaPrint />内部审核<Caret /></Tool>
            <Tool><FaRegCheckSquare />指示检查<Caret /></Tool>
            <Tool><FaUpload />发送指示</Tool>
            <Tool><FaCloudUploadAlt />文控上网</Tool>
            <Tool><FaRoad />ECN升级</Tool>
            <Tool $off><FaRegImage />重选开料图</Tool>
            <Tool><FaCogs />生成MI流程</Tool>
          </Toolbar>
          <GridBox>
            <GridPane>
              <DataTable>
                <colgroup><col style={{ width: 34 }} />{GRID.map(([h, w]) => <col key={h} style={{ width: w }} />)}<col /></colgroup>
                <thead><tr><th><Corner /></th>{GRID.map(([h]) => <th key={h}>{h}</th>)}<th /></tr></thead>
                <tbody><tr><td><RowMark /></td>{GRID.map(([h, , v]) => <td key={h}>{v}</td>)}<td /></tr></tbody>
              </DataTable>
            </GridPane>
          </GridBox>
          <HSash />
          <Lower>
            <FlowGroup>
              <LegendRow><LegendLine /><Legend>【2B5TX057A0】工艺流程</Legend><LegendLine /></LegendRow>
              <FlowBody>
                <SideStrip>
                  <SideTab>
                    <svg width="22" height="94" viewBox="0 0 22 94" aria-hidden="true">
                      <path d="M22 4.500H5L2.500 7V73L21.500 93" fill="#b4ccf1" stroke="#35568f" />
                    </svg>
                    <span>设备结构</span>
                  </SideTab>
                </SideStrip>
                <StructurePane>
                  <Hint>
                    单击节点加载工艺流程
                    <svg width="26" height="22" viewBox="0 0 26 22" aria-hidden="true">
                      <ellipse cx="13" cy="9" rx="12" ry="9" fill="#bcbc00" /><path d="M4 14q2 4-2 7 6 0 9-4z" fill="#bcbc00" />
                    </svg>
                  </Hint>
                  <Blank />
                </StructurePane>
                <Sash />
                <TreePane>
                  <TreeTop>
                    <TreeTables>
                      <TreeHead>
                        <TreeCols />
                        <thead><tr><th>流程</th><th>BOM工厂</th><th>编写人</th><th>核审人</th><th>状态</th><th /></tr></thead>
                      </TreeHead>
                      <TreeScroll>
                        <TreeTable>
                          <TreeCols />
                          <tbody>
                            {TREE.map(([group, leaves]) => (
                              <React.Fragment key={group}>
                                {group && <tr><td><Node><GroupNode />{group}</Node></td><TreeCells /></tr>}
                                {leaves.map((leaf, i) => (
                                  <tr key={leaf}><td><Node><LeafNode last={i === leaves.length - 1} />{leaf}</Node></td><TreeCells /></tr>
                                ))}
                              </React.Fragment>
                            ))}
                            <tr><td><Node><LeafNode last /></Node></td><td /><td /><td /><td /><td /></tr>
                          </tbody>
                        </TreeTable>
                      </TreeScroll>
                    </TreeTables>
                    <VBar><Arrow $to="up" /><Gap $w={108} /><Thumb $dir="v" $size={246} /><Fill /><Arrow $to="down" /></VBar>
                  </TreeTop>
                  <HBar><Arrow $to="left" /><Gap $w={6} /><Thumb $dir="h" $size={247} /><Fill /><Arrow $to="right" /><Gap $w={18} /></HBar>
                </TreePane>
              </FlowBody>
            </FlowGroup>
            <Sash />
            <InfoPane>
              <InfoTabs><InfoTab $on>基本信息</InfoTab><InfoTab>工艺信息</InfoTab></InfoTabs>
              <SubTab>基本参数</SubTab>
              <InfoTable>
                <colgroup><col style={{ width: 35 }} /><col style={{ width: 118 }} /><col /></colgroup>
                <thead><tr><th><Corner /></th><th>项目</th><th /></tr></thead>
                <tbody>
                  <tr><td><RowMark /></td><td>是否需客户</td><td /></tr>
                  <tr><td /><td>是否100%阻</td><td /></tr>
                  <tr><td /><td>UL file No</td><td /></tr>
                  <tr><td /><td>UL Type</td><td /></tr>
                  <tr><td /><td>合拼板数</td><td /></tr>
                </tbody>
              </InfoTable>
              <Fill />
              <HBar><Gap $w={3} /><Arrow $to="left" /><Gap $w={6} /><Thumb $dir="h" $size={300} /></HBar>
            </InfoPane>
          </Lower>
        </Workspace>
      </Body>

      <StatusBar>
        <StatusHalf>
          <StatusItems>
            <FaThLarge /><span>信息中心</span><FaMale /><span>龙敦远</span>
            <ModelText>Model:【正式】||DB:【正式库】</ModelText>
          </StatusItems>
          <span>兴森快捷 EMS工程系统 Version: 1.0.1.06</span>
        </StatusHalf>
      </StatusBar>

      <TaskBar>
        <Orb aria-label="开始"><Flag /></Orb>
        <TaskList>
          <Task aria-label="贝壳"><Shell /></Task>
          <Task aria-label="Total Commander"><Floppy /></Task>
          <Task aria-label="便笺"><Notes /></Task>
          <Task aria-label="Genesis"><RedG /></Task>
          <Task aria-label="钉钉"><Wing /></Task>
          <Task aria-label="兴森快捷"><GreenP /></Task>
          <Task aria-label="光盘"><Disc /></Task>
          <Task $stack aria-label="X"><XMark /></Task>
          <Task $stack aria-label="Excel"><Sheet /></Task>
          <Task aria-label="光盘"><Disc /></Task>
          <Task $active aria-label="Lister"><Paper w={32} /></Task>
        </TaskList>
        <Tray>
          <svg width="55" height="20" viewBox="0 0 55 20" aria-hidden="true">
            <path d="M1 8h14v7H1z" fill="#c8ccd2" stroke="#888" /><path d="M3 10h10M3 13h10" stroke="#555" strokeDasharray="1 1" /><path d="M4 6q3-3 6-2t5-2" stroke="#aaa" fill="none" />
            <circle cx="30" cy="8" r="7" fill="#1a2fc0" stroke="#dfe6ff" />
            <path d="M27.500 6q0-3 3-3t2.500 3q0 1-2.500 2.500V10M30.500 11.500v2" stroke="#fff" strokeWidth="1.600" fill="none" />
            <path d="M48 2h6v4h-6z" fill="none" stroke="#fff" /><path d="M46 4h6v3h-6z" fill="#12305c" stroke="#fff" /><path d="M46 14h6l-3 3z" fill="#fff" />
          </svg>
          <TrayArrow />
          <svg width="17" height="15" viewBox="0 0 17 15" aria-hidden="true"><path d="M0 14 10 1v13z" fill="#e01818" /><path d="m11 5 6 9h-4z" fill="#22c43a" /></svg>
          <svg width="16" height="16" viewBox="0 0 16 16" aria-hidden="true"><path d="M1.500 1v14" stroke="#fff" strokeWidth="1.500" /><path d="M3 2h5l1 1h5v6H3z" fill="#fff" /><circle cx="11" cy="11" r="4.500" fill="#d83a2c" /><path d="m9 9 4 4m0-4-4 4" stroke="#fff" strokeWidth="1.500" /></svg>
          <svg width="16" height="16" viewBox="0 0 16 16" aria-hidden="true"><path d="M1 5h3l4-4v14l-4-4H1z" fill="#fff" /><path d="M10 5q2 3 0 6M13 3q3 5 0 10" stroke="#fff" fill="none" /></svg>
          <svg width="16" height="16" viewBox="0 0 16 16" aria-hidden="true"><path d="M5 4h10v8H5zM7 14.500h7M1 1v3h4V1M3 4v10h3" stroke="#fff" strokeWidth="1.500" fill="none" /></svg>
          <Clock>15:56<br />2023/7/20</Clock>
        </Tray>
        <Peek aria-label="显示桌面" />
      </TaskBar>

      <ListerWindow>
        <ListerTitle>
          <Paper w={15} />
          <span>Lister - [C:\Users\hy-ldy\AppData\Local\Temp\_tc\2b5tx057a0.txt]</span>
          <WinButtons>
            <WinButton aria-label="最小化"><svg width="12" height="5"><rect x=".5" y=".5" width="11" height="4" fill="#fff" stroke="#445" /></svg></WinButton>
            <WinButton aria-label="最大化"><svg width="12" height="10"><rect x="1.500" y="1.500" width="9" height="7" fill="#556" stroke="#fff" strokeWidth="2" /></svg></WinButton>
            <WinButton $close aria-label="关闭"><svg width="12" height="10"><path d="m2 1 8 8m0-8L2 9" stroke="#fff" strokeWidth="2.500" /></svg></WinButton>
          </WinButtons>
        </ListerTitle>
        <Client>
          <MenuBar>
            <button>文件(F)</button><button>编辑(E)</button><button>选项(O)</button><button>编码(C)</button><button>帮助(H)</button>
            <output>100 %</output>
          </MenuBar>
          <Page>
            {LINES.map((t, i) => <Line key={i} $sel={t.startsWith("X-RAY")}><Mixed text={t} /></Line>)}
          </Page>
        </Client>
      </ListerWindow>

      <Annotation width="280" height="296" viewBox="0 0 280 296" aria-hidden="true">
        <path d="M7 7 258 272" stroke="#00ff00" strokeWidth="6" />
        <path d="M275 289 249 276 266 263z" fill="#00ff00" stroke="#00ff00" strokeWidth="2" strokeLinejoin="round" />
      </Annotation>
    </Desktop>
  );
}
